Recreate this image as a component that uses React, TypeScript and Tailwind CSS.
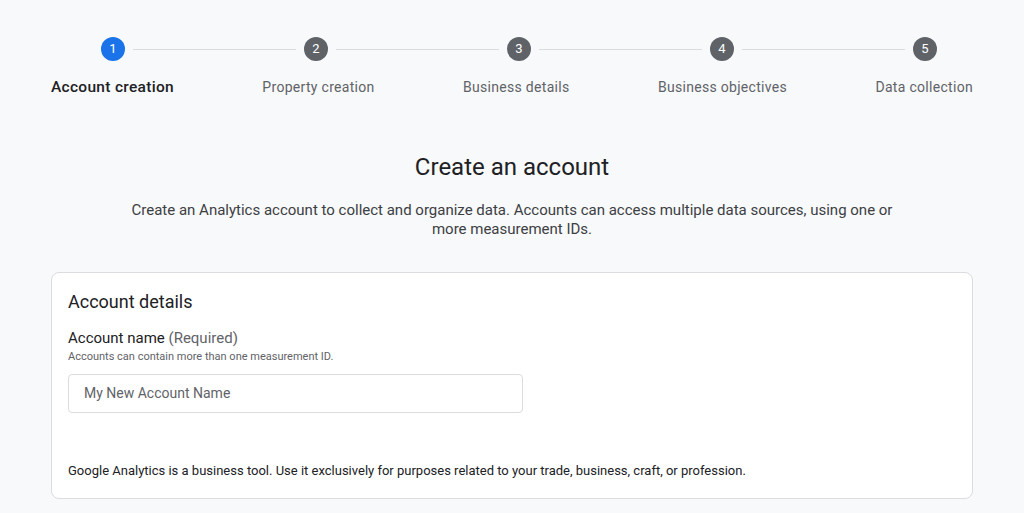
const steps = ["Account creation", "Property creation", "Business details", "Business objectives", "Data collection"];

export default function App() {
  return (
    <div className="h-[513px] overflow-hidden bg-[#f8f9fa] px-[38px] pt-[37px] text-[#202124]" style={{ fontFamily: "Roboto, 'Noto Sans', sans-serif" }}>
      <div className="px-[13px]">
        <div className="flex items-center pl-[50px] pr-[36px]">
          {steps.map((s, i) => (
            <div key={s} className={`flex items-center ${i < 4 ? "flex-1" : ""}`}>
              <div className={`flex h-6 w-6 shrink-0 items-center justify-center rounded-full text-[13px] text-white ${i === 0 ? "bg-[#1a73e8]" : "bg-[#5f6368]"}`}>{i + 1}</div>
              {i < 4 && <div className="mx-2 h-px flex-1 bg-[#dadce0]" />}
            </div>
          ))}
        </div>
        <div className="mt-[16px] flex justify-between text-[14px] leading-5 tracking-[0.3px]">
          {steps.map((s, i) => (
            <div key={s} className={i === 0 ? "text-[15.5px] font-medium text-[#202124]" : "text-[#5f6368]"}>{s}</div>
          ))}
        </div>
        <h1 className="mt-[54px] text-center text-[24px] leading-8 text-[#202124]">Create an account</h1>
        <p className="mx-auto mt-[18px] w-[780px] text-center text-[15px] leading-[19px] text-[#3c4043]">
          Create an Analytics account to collect and organize data. Accounts can access multiple data sources, using one or more measurement IDs.
        </p>
        <div className="mt-[33px] h-[227px] rounded-lg border border-[#dadce0] bg-white px-[16px] pt-[17px]">
          <div className="text-[18px] leading-6">Account details</div>
          <div className="mt-[14px] text-[15px] leading-5">Account name <span className="text-[#5f6368]">(Required)</span></div>
          <div className="mt-[1px] text-[11px] leading-4 text-[#5f6368]">Accounts can contain more than one measurement ID.</div>
          <div className="mt-[9px] flex h-[39px] w-[455px] items-center rounded border border-[#dadce0] px-[15px] text-[14px] text-[#5f6368]">My New Account Name</div>
          <div className="mt-[50px] text-[13px] leading-4">Google Analytics is a business tool. Use it exclusively for purposes related to your trade, business, craft, or profession.</div>
        </div>
      </div>
    </div>
  );
}
